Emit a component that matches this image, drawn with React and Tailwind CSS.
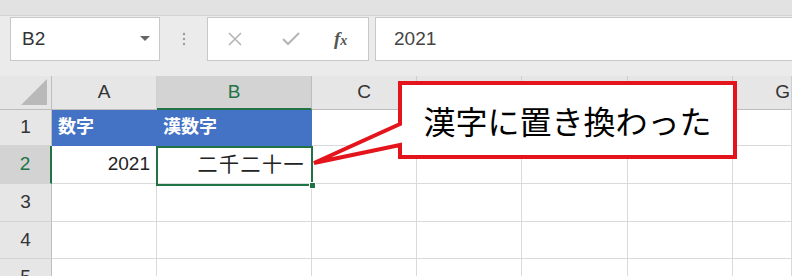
import React from "react";

const COLS = [
  { key: "A", w: 105 },
  { key: "B", w: 155 },
  { key: "C", w: 105 },
  { key: "D", w: 105, hidden: true },
  { key: "E", w: 106, hidden: true },
  { key: "F", w: 105, hidden: true },
  { key: "G", w: 59 },
];
const ROWS = [
  { n: 1, h: 36 },
  { n: 2, h: 38 },
  { n: 3, h: 38 },
  { n: 4, h: 37 },
  { n: 5, h: 37 },
];

const font = { fontFamily: '"Liberation Sans", "Noto Sans CJK JP", sans-serif' };

function HeaderRow() {
  return (
    <div className="flex h-[34px]">
      <div className="relative w-[52px] shrink-0 bg-[#e6e6e6] border-r border-b border-[#bdbdbd]">
        <svg className="absolute right-[4px] bottom-[4px]" width="26" height="26" viewBox="0 0 26 26">
          <polygon points="26,0 26,26 0,26" fill="#b9b9b9" />
        </svg>
      </div>
      {COLS.map((c) => (
        <div
          key={c.key}
          style={{ width: c.w }}
          className={
            "shrink-0 flex items-center justify-center text-[19px] border-b " +
            (c.key === "B"
              ? "bg-[#d3d3d3] text-[#217346] border-b-2 border-b-[#217346] border-r border-r-[#bdbdbd]"
              : "bg-[#e6e6e6] text-[#333] border-r border-[#cfcfcf] border-b-[#bdbdbd]") +
            (c.key === "G" ? " justify-end pr-[1px]" : "")
          }
        >
          {c.hidden ? null : c.key}
        </div>
      ))}
    </div>
  );
}

function DataRow({ n, h }) {
  const selected = n === 2;
  return (
    <div className="flex" style={{ height: h }}>
      <div
        className={
          "w-[52px] shrink-0 flex items-center justify-center text-[19px] border-b border-[#d4d4d4] " +
          (selected
            ? "bg-[#d3d3d3] text-[#217346] border-r-2 border-r-[#217346]"
            : "bg-[#e6e6e6] text-[#333] border-r border-r-[#bdbdbd]")
        }
      >
        {n}
      </div>
      {COLS.map((c) => {
        let content = null;
        let cls = "bg-white border-r border-b border-[#dadada]";
        if (n === 1 && (c.key === "A" || c.key === "B")) {
          cls = "bg-[#4472c4] border-r border-b border-[#4472c4] text-white font-bold text-[18px] pl-[6px]";
          content = c.key === "A" ? "数字" : "漢数字";
        }
        if (n === 2 && c.key === "A") {
          cls += " justify-end pr-[6px] text-[19px] text-[#222]";
          content = "2021";
        }
        if (n === 2 && c.key === "B") {
          cls += " justify-end pr-[6px] text-[20px] tracking-[1.5px] text-[#222]";
          content = "二千二十一";
        }
        return (
          <div key={c.key} style={{ width: c.w }} className={"shrink-0 flex items-center " + cls}>
            {content}
          </div>
        );
      })}
    </div>
  );
}

export default function App() {
  return (
    <div className="w-[800px] h-[276px] bg-white overflow-hidden" style={font}>
      <div className="relative w-[792px] h-[276px] overflow-hidden bg-[#ebebeb]">
        {/* top strip */}
        <div className="h-[16px] bg-[#e2e2e2] border-b border-[#d2d2d2]" />
        {/* formula bar */}
        <div className="flex items-start h-[60px] pt-[1px]">
          <div className="ml-[10px] w-[150px] h-[44px] bg-white border border-[#c8c8c8] flex items-center pl-[11px] pr-[9px]">
            <span className="text-[19px] text-[#333] flex-1">B2</span>
            <svg width="10" height="6" viewBox="0 0 10 6">
              <polygon points="0,0 10,0 5,5" fill="#666" />
            </svg>
          </div>
          <div className="w-[47px] h-[44px] flex items-center justify-center">
            <svg width="4" height="14" viewBox="0 0 4 14">
              <circle cx="2" cy="2" r="1.2" fill="#9a9a9a" />
              <circle cx="2" cy="7" r="1.2" fill="#9a9a9a" />
              <circle cx="2" cy="12" r="1.2" fill="#9a9a9a" />
            </svg>
          </div>
          <div className="w-[162px] h-[44px] bg-white border border-[#c8c8c8] flex items-center">
            <svg className="ml-[19px]" width="16" height="16" viewBox="0 0 16 16">
              <path d="M2 2 L14 14 M14 2 L2 14" stroke="#b5b5b5" strokeWidth="1.6" fill="none" />
            </svg>
            <svg className="ml-[38px]" width="20" height="16" viewBox="0 0 20 16">
              <path d="M2 8 L7 13 L18 2" stroke="#b5b5b5" strokeWidth="2" fill="none" />
            </svg>
            <span
              className="ml-[33px] text-[19px] italic font-bold text-[#555]"
              style={{ fontFamily: '"Liberation Serif", serif' }}
            >
              f<span className="text-[14px]">x</span>
            </span>
          </div>
          <div className="ml-[6px] flex-1 h-[44px] bg-white border-y border-l border-[#c8c8c8] flex items-center pl-[18px]">
            <span className="text-[19px] text-[#444]">2021</span>
          </div>
        </div>
        {/* grid */}
        <HeaderRow />
        {ROWS.map((r) => (
          <DataRow key={r.n} n={r.n} h={r.h} />
        ))}

        {/* selection border on B2 */}
        <div className="absolute left-[156px] top-[146px] w-[157px] h-[40px] border-2 border-[#217346]" />
        <div className="absolute left-[309px] top-[182px] w-[7px] h-[7px] bg-[#217346] border border-white" />

        {/* callout */}
        <svg className="absolute left-0 top-0" width="792" height="276" viewBox="0 0 792 276">
          <path
            d="M400 83 L735 83 L735 157 L400 157 L400 145 L314 163 L400 124 Z"
            fill="white"
            stroke="#e3141b"
            strokeWidth="4"
            strokeLinejoin="miter"
          />
        </svg>
        <div
          className="absolute left-[402px] top-[85px] w-[331px] h-[70px] flex items-center justify-center text-[32px] text-black"
          style={{ fontFamily: '"Noto Sans CJK JP", sans-serif' }}
        >
          漢字に置き換わった
        </div>
      </div>
    </div>
  );
}
